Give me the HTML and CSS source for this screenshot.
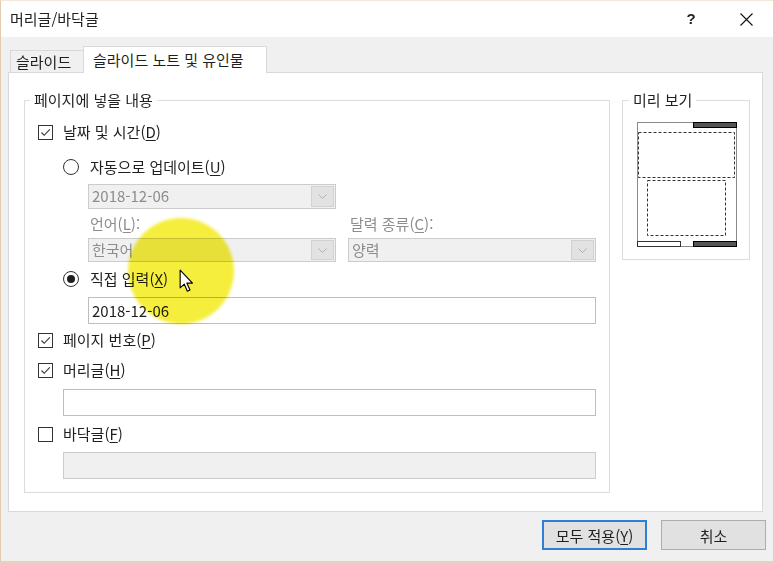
FILE: index.html
```html
<!DOCTYPE html>
<html lang="ko">
<head>
<meta charset="utf-8">
<title>머리글/바닥글</title>
<link rel="stylesheet" href="styles.css">
</head>
<body>
<div class="window">
  <div class="titlebar">
    <span class="title">머리글/바닥글</span>
    <span class="help">?</span>
    <span class="close">
      <svg width="13" height="13" viewBox="0 0 13 13"><path d="M0.5 0.5 L12.5 12.5 M12.5 0.5 L0.5 12.5" stroke="#111" stroke-width="1.1" fill="none"/></svg>
    </span>
  </div>

  <div class="tabs">
    <div class="tab">슬라이드</div>
    <div class="tab active">슬라이드 노트 및 유인물</div>
  </div>

  <div class="panel">
    <fieldset class="group main">
      <legend>페이지에 넣을 내용</legend>

      <div class="row">
        <span class="check on"><svg width="13" height="13" viewBox="0 0 13 13"><path d="M2.5 6.5 L5.2 9.3 L10.8 3.4" stroke="#333" stroke-width="1.1" fill="none"/></svg></span>
        <span>날짜 및 시간(<u>D</u>)</span>
      </div>

      <div class="row sub r-auto">
        <span class="radio"></span>
        <span>자동으로 업데이트(<u>U</u>)</span>
      </div>

      <div class="select wide-sel s-date">
        <span class="val">2018-12-06</span>
        <span class="arrow"><svg width="9" height="5" viewBox="0 0 9 5"><path d="M0.5 0.5 L4.5 4.5 L8.5 0.5" stroke="#b0b0b0" fill="none"/></svg></span>
      </div>

      <div class="pair labels">
        <span class="dim">언어(<u>L</u>):</span>
        <span class="dim">달력 종류(<u>C</u>):</span>
      </div>

      <div class="pair selects">
        <div class="select">
          <span class="val">한국어</span>
          <span class="arrow"><svg width="9" height="5" viewBox="0 0 9 5"><path d="M0.5 0.5 L4.5 4.5 L8.5 0.5" stroke="#b0b0b0" fill="none"/></svg></span>
        </div>
        <div class="select">
          <span class="val">양력</span>
          <span class="arrow"><svg width="9" height="5" viewBox="0 0 9 5"><path d="M0.5 0.5 L4.5 4.5 L8.5 0.5" stroke="#b0b0b0" fill="none"/></svg></span>
        </div>
      </div>

      <div class="row sub r-manual">
        <span class="radio on"></span>
        <span>직접 입력(<u>X</u>)</span>
      </div>

      <div class="input i-date">2018-12-06</div>

      <div class="row r-page">
        <span class="check on"><svg width="13" height="13" viewBox="0 0 13 13"><path d="M2.5 6.5 L5.2 9.3 L10.8 3.4" stroke="#333" stroke-width="1.1" fill="none"/></svg></span>
        <span>페이지 번호(<u>P</u>)</span>
      </div>

      <div class="row r-header">
        <span class="check on"><svg width="13" height="13" viewBox="0 0 13 13"><path d="M2.5 6.5 L5.2 9.3 L10.8 3.4" stroke="#333" stroke-width="1.1" fill="none"/></svg></span>
        <span>머리글(<u>H</u>)</span>
      </div>

      <div class="input i-header"></div>

      <div class="row r-footer">
        <span class="check"></span>
        <span>바닥글(<u>F</u>)</span>
      </div>

      <div class="input i-footer disabled"></div>
    </fieldset>

    <fieldset class="group preview">
      <legend>미리 보기</legend>
      <svg class="page" width="100" height="125" viewBox="0 0 100 125">
        <rect x="0.5" y="0.5" width="99" height="124" fill="#fff" stroke="#8a8a8a"/>
        <rect x="56.5" y="0.5" width="43" height="5" fill="#555" stroke="#000"/>
        <rect x="1.5" y="10.5" width="96" height="45" fill="none" stroke="#333" stroke-dasharray="3 2"/>
        <rect x="10.5" y="58.5" width="78" height="55" fill="none" stroke="#333" stroke-dasharray="3 2"/>
        <rect x="0.5" y="119.5" width="43" height="5" fill="#fff" stroke="#333"/>
        <rect x="56.5" y="119.5" width="43" height="5" fill="#555" stroke="#000"/>
      </svg>
    </fieldset>
  </div>

  <div class="footer">
    <button class="btn primary">모두 적용(<u>Y</u>)</button>
    <button class="btn">취소</button>
  </div>

  <div class="highlight"></div>
  <svg class="cursor" width="16" height="24" viewBox="0 0 14 21">
    <path d="M1 1 L1 16.5 L4.6 13.2 L7.3 19.4 L9.6 18.4 L6.9 12.3 L11.8 12.3 Z" fill="#fff" stroke="#000" stroke-width="1" stroke-linejoin="round"/>
  </svg>
</div>
</body>
</html>
```

FILE: styles.css
```css
* {
  box-sizing: border-box;
}

html, body {
  margin: 0;
  padding: 0;
}

body {
  width: 773px;
  height: 563px;
  overflow: hidden;
  font-family: "Noto Sans CJK KR", "Noto Sans", sans-serif;
  font-size: 15px;
  line-height: 20px;
  color: #1f1f1f;
  background: #f0f0f0;
}

u {
  text-decoration: underline;
  text-underline-offset: 2px;
}

.window {
  position: relative;
  width: 773px;
  height: 563px;
  background: #f0f0f0;
  border-top: 1px solid #f3e7da;
  border-left: 1px solid #e2cbb0;
  border-bottom: 2px solid #e3d3c0;
}

/* title bar */
.titlebar {
  display: flex;
  align-items: center;
  height: 36px;
  background: #fff;
}

.title {
  padding-left: 9px;
}

.help {
  margin-left: auto;
  margin-right: 9px;
  width: 46px;
  text-align: center;
  font-family: "Liberation Sans", sans-serif;
  font-weight: bold;
  font-size: 15px;
  color: #222;
}

.close {
  width: 46px;
  margin-right: 4px;
  display: flex;
  justify-content: center;
  align-items: center;
}

/* tabs */
.tabs {
  display: flex;
  align-items: flex-end;
  height: 26px;
  margin-top: 9px;
  margin-left: 9px;
}

.tab {
  height: 22px;
  width: 73px;
  padding-left: 5px;
  line-height: 21px;
  border: 1px solid #d9d9d9;
  border-bottom: none;
  border-right: none;
  background: #f0f0f0;
}

.tab.active {
  position: relative;
  z-index: 1;
  width: 184px;
  height: 27px;
  margin-bottom: -1px;
  padding-left: 9px;
  line-height: 26px;
  border-right: 1px solid #d9d9d9;
  background: #fff;
}

/* panel */
.panel {
  display: flex;
  align-items: flex-start;
  gap: 12px;
  width: 755px;
  height: 440px;
  margin-left: 7px;
  padding: 17px 12px 0 15px;
  background: #fff;
  border: 1px solid #d9d9d9;
}

.group {
  margin: 0;
  min-width: 0;
  border: 1px solid #dcdcdc;
}

.group legend {
  padding: 0 4px;
  line-height: 20px;
}

.main {
  width: 586px;
  padding: 12px 13px 13px 12px;
}

.main legend {
  margin-left: -7px;
}

.preview {
  width: 128px;
  padding: 12px 13px 12px 14px;
}

.preview legend {
  margin-left: -8px;
}

.page {
  display: block;
}

/* rows */
.row {
  display: flex;
  align-items: center;
  height: 20px;
}

.row.sub {
  margin-left: 26px;
}

.r-auto { margin-top: 15px; }
.r-manual { margin-top: 7px; }
.r-page { margin-top: 6px; }
.r-header { margin-top: 10px; }
.r-footer { margin-top: 8px; }

.check {
  width: 15px;
  height: 15px;
  margin-left: 1px;
  margin-right: 10px;
  border: 1px solid #333;
  background: #fff;
  display: flex;
  align-items: center;
  justify-content: center;
}

.radio {
  width: 16px;
  height: 16px;
  margin-right: 11px;
  border: 1px solid #333;
  border-radius: 50%;
  background: #fff;
  display: flex;
  align-items: center;
  justify-content: center;
}

.radio.on::after {
  content: "";
  width: 8px;
  height: 8px;
  border-radius: 50%;
  background: #1f1f1f;
}

/* selects */
.select {
  display: flex;
  height: 24px;
  border: 1px solid #cccccc;
  background: #f0f0f0;
  color: #8d8d8d;
}

.select .val {
  flex: 1;
  padding-left: 3px;
  line-height: 22px;
}

.select .arrow {
  width: 23px;
  margin: 1px;
  display: flex;
  align-items: center;
  justify-content: center;
  background: #e2e2e2;
  border: 1px solid #d2d2d2;
}

.s-date {
  width: 248px;
  height: 25px;
  margin-left: 51px;
  margin-top: 7px;
}

.pair {
  display: grid;
  grid-template-columns: 248px 248px;
  column-gap: 12px;
  margin-left: 51px;
}

.labels {
  height: 20px;
  margin-top: 5px;
  padding-left: 2px;
}

.labels .dim + .dim {
  padding-left: 0;
}

.dim {
  color: #8d8d8d;
}

.selects {
  margin-top: 4px;
}

/* inputs */
.input {
  height: 27px;
  padding-left: 3px;
  line-height: 25px;
  border: 1px solid #bdbdbd;
  background: #fff;
}

.input.disabled {
  background: #f0f0f0;
  border-color: #cccccc;
}

.i-date {
  width: 508px;
  margin-left: 51px;
  margin-top: 8px;
}

.i-header {
  width: 533px;
  margin-left: 26px;
  margin-top: 9px;
}

.i-footer {
  width: 533px;
  margin-left: 26px;
  margin-top: 8px;
}

/* footer */
.footer {
  display: flex;
  justify-content: flex-end;
  gap: 14px;
  padding: 8px 7px 0 0;
}

.btn {
  width: 105px;
  height: 30px;
  padding: 0;
  font-family: inherit;
  font-size: 15px;
  color: #1f1f1f;
  background: #e1e1e1;
  border: 1px solid #adadad;
}

.btn.primary {
  border: 2px solid #2f7fd4;
}

/* overlays */
.highlight {
  position: absolute;
  left: 127px;
  top: 217px;
  width: 106px;
  height: 106px;
  border-radius: 50%;
  background: #f6ee3c;
  mix-blend-mode: multiply;
  filter: blur(1.5px);
}

.cursor {
  position: absolute;
  left: 178px;
  top: 268px;
}
```
